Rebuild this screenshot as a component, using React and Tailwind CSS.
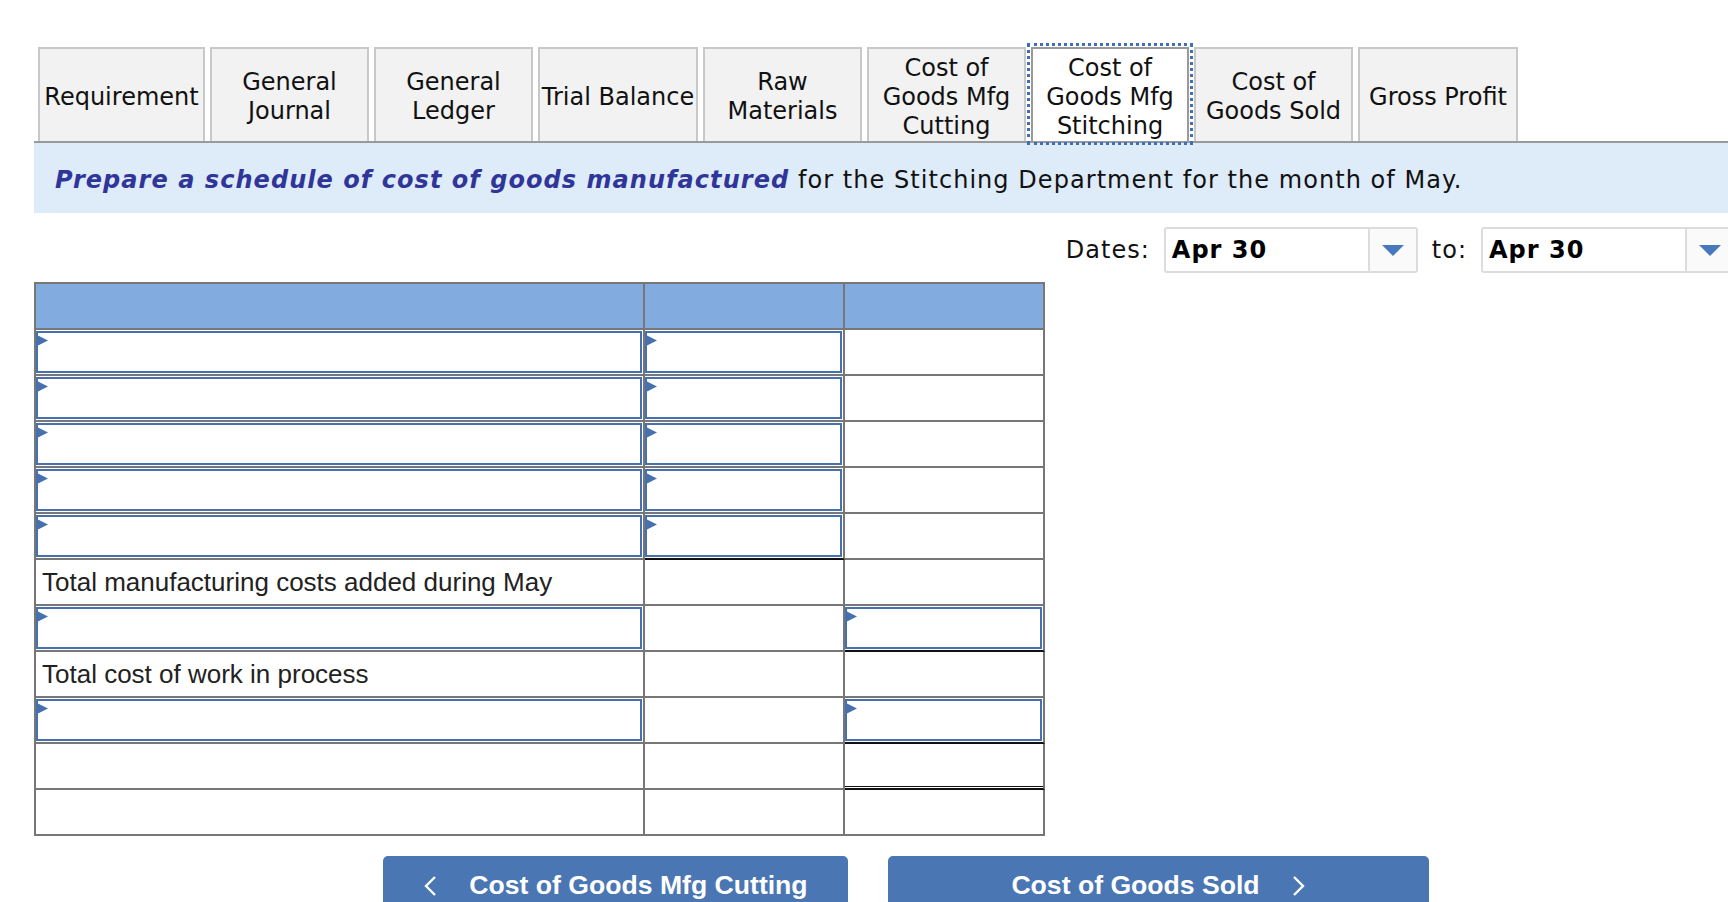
const tabs = [
  { lines: ["Requirement"], w: "w-[167px]" },
  { lines: ["General", "Journal"], w: "w-[159px]" },
  { lines: ["General", "Ledger"], w: "w-[159px]" },
  { lines: ["Trial Balance"], w: "w-[160px]" },
  { lines: ["Raw", "Materials"], w: "w-[159px]" },
  { lines: ["Cost of", "Goods Mfg", "Cutting"], w: "w-[159px]" },
  { lines: ["Cost of", "Goods Mfg", "Stitching"], w: "w-[158px]", active: true },
  { lines: ["Cost of", "Goods Sold"], w: "w-[159px]" },
  { lines: ["Gross Profit"], w: "w-[160px]" },
];

// kinds: "in" = input box, "" = empty, text otherwise
const rows = [
  { cells: ["in", "in", ""] },
  { cells: ["in", "in", ""] },
  { cells: ["in", "in", ""] },
  { cells: ["in", "in", ""] },
  { cells: ["in", "in", ""], line: 1 },
  { cells: ["Total manufacturing costs added during May", "", ""] },
  { cells: ["in", "", "in"], line: 2 },
  { cells: ["Total cost of work in process", "", ""] },
  { cells: ["in", "", "in"], line: 2 },
  { cells: ["", "", ""], double: true },
  { cells: ["", "", ""] },
];

const widths = ["w-[609px]", "w-[200px]", "w-[200px]"];

function Tab({ tab }) {
  const base = "flex h-[94px] flex-col items-center justify-center border-x-2 border-t-2 pt-[4px] text-[24px] leading-[29px] text-[#111]";
  const look = tab.active
    ? "bg-white border-[#9a9a9a] outline-[3px] outline-dotted outline-[#3f6fb8] outline-offset-[1px]"
    : "bg-[#f2f2f2] border-[#c8c8c8]";
  return (
    <div className={`${base} ${look} ${tab.w}`}>
      {tab.lines.map((l) => (
        <span key={l} className="whitespace-nowrap">{l}</span>
      ))}
    </div>
  );
}

function InputBox() {
  return (
    <div className="relative h-full w-full border-2 border-[#4670b0] bg-white">
      <svg className="absolute left-[-1px] top-[2px]" width="11" height="11" viewBox="0 0 11 11">
        <polygon points="0,0 11,5.5 0,11" fill="#4670b0" />
      </svg>
    </div>
  );
}

function DateSelect() {
  return (
    <div className="flex h-[46px] w-[254px] rounded-[3px] border-2 border-[#dcdcdc]">
      <div className="flex flex-1 items-center pl-[6px] text-[24px] font-bold tracking-[1px] text-black">Apr 30</div>
      <div className="flex w-[48px] items-center justify-center border-l-2 border-[#dcdcdc] bg-[#fafafa]">
        <svg width="22" height="11" viewBox="0 0 22 11">
          <polygon points="0,0 22,0 11,11" fill="#4a78bd" />
        </svg>
      </div>
    </div>
  );
}

export default function App() {
  return (
    <div className="h-[902px] w-full overflow-hidden bg-white font-['DejaVu_Sans',sans-serif]">
      <div className="ml-[34px] flex items-end gap-[5px] border-b-2 border-[#9a9a9a] pl-[4px] pt-[47px]">
        {tabs.map((t) => (
          <Tab key={t.lines.join(" ")} tab={t} />
        ))}
      </div>

      <div className="ml-[34px] flex h-[70px] items-center bg-[#deebf8] pl-[21px] pt-[4px] text-[24px] tracking-[1.05px] text-[#111]">
        <span className="whitespace-nowrap">
          <b className="italic text-[#30359a]">Prepare a schedule of cost of goods manufactured</b> for the
          Stitching Department for the month of May.
        </span>
      </div>

      <div className="mt-[14px] flex w-[1735px] items-center justify-end gap-[14px] text-[24px] tracking-[1px] text-[#111]">
        <span>Dates:</span>
        <DateSelect />
        <span>to:</span>
        <DateSelect />
      </div>

      <div className="ml-[34px] mt-[9px] w-fit border-l-2 border-t-2 border-[#777] font-['Liberation_Sans',Arial,sans-serif] text-[26px] text-[#222]">
        <div className="flex">
          {widths.map((w, i) => (
            <div key={i} className={`h-[46px] border-b-2 border-r-2 border-[#777] bg-[#82abe0] ${w}`} />
          ))}
        </div>
        {rows.map((r, ri) => (
          <div key={ri} className="flex">
            {r.cells.map((c, ci) => {
              const black = (r.line === 1 && ci === 1) || (r.line === 2 && ci === 2) || (r.double && ci === 2);
              const bottom = black ? "border-b-[#111]" : "border-b-[#777]";
              return (
                <div
                  key={ci}
                  className={`flex h-[46px] flex-col border-b-2 border-r-2 border-r-[#777] ${bottom} ${widths[ci]} ${c === "in" ? "py-px pr-px" : ""}`}
                >
                  {c === "in" && <InputBox />}
                  {c !== "in" && c !== "" && (
                    <div className="flex h-full items-center whitespace-nowrap pl-[6px]">{c}</div>
                  )}
                  {r.double && ci === 2 && <div className="mb-px mt-auto border-b border-[#111]" />}
                </div>
              );
            })}
          </div>
        ))}
      </div>

      <div className="ml-[383px] mt-[20px] flex gap-[40px] font-['Liberation_Sans',Arial,sans-serif] text-[26.6px] font-bold text-white">
        <button className="flex h-[60px] w-[465px] items-center justify-center gap-[32px] rounded-t-[5px] bg-[#4a76b3]">
          <svg width="14" height="22" viewBox="0 0 14 22">
            <polyline points="12,2 3,11 12,20" fill="none" stroke="white" strokeWidth="2.4" />
          </svg>
          <span>Cost of Goods Mfg Cutting</span>
        </button>
        <button className="flex h-[60px] w-[541px] items-center justify-center gap-[32px] rounded-t-[5px] bg-[#4a76b3]">
          <span>Cost of Goods Sold</span>
          <svg width="14" height="22" viewBox="0 0 14 22">
            <polyline points="2,2 11,11 2,20" fill="none" stroke="white" strokeWidth="2.4" />
          </svg>
        </button>
      </div>
    </div>
  );
}
